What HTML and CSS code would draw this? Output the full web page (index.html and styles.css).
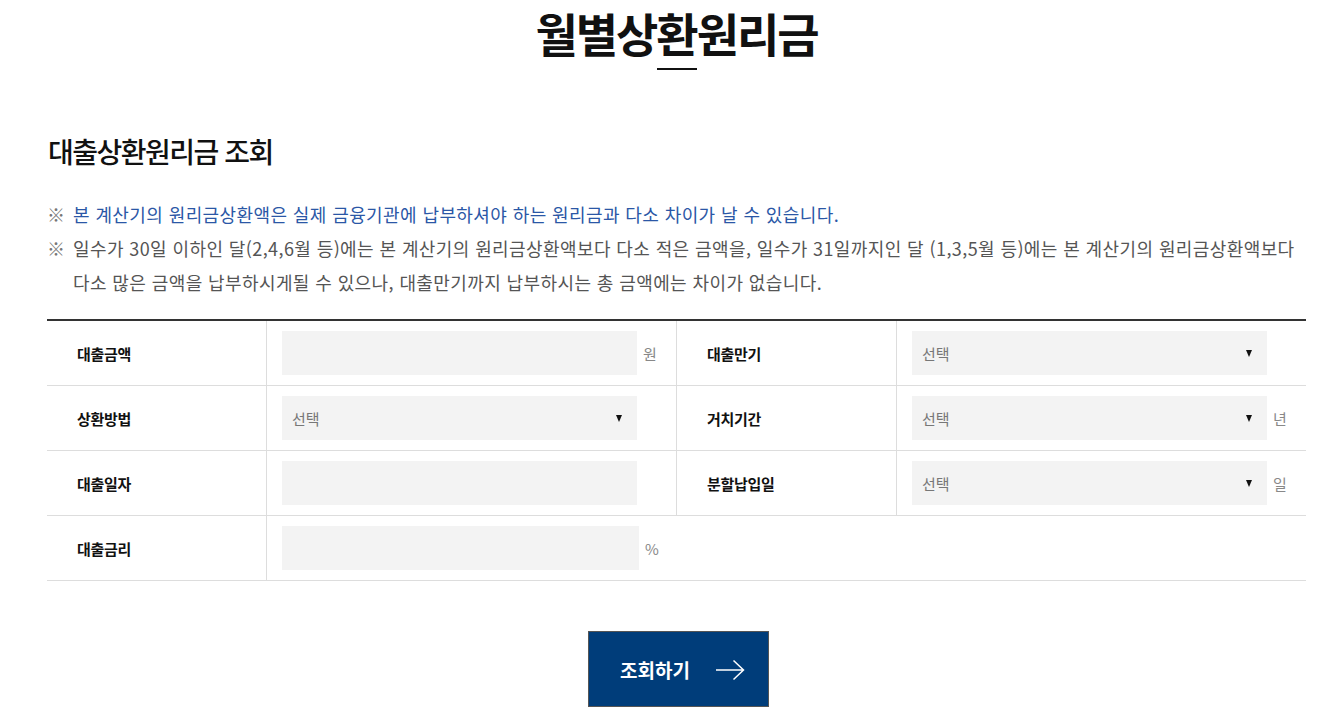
FILE: index.html
```html
<!DOCTYPE html>
<html lang="ko">
<head>
<meta charset="utf-8">
<title>월별상환원리금</title>
<link rel="stylesheet" href="styles.css">
</head>
<body>
<div class="wrap">
  <h1 class="page-title">월별상환원리금</h1>
  <div class="title-bar"></div>

  <h2 class="sub-title">대출상환원리금 조회</h2>

  <ul class="notes">
    <li class="note note-blue"><span class="mark">※</span><span>본 계산기의 원리금상환액은 실제 금융기관에 납부하셔야 하는 원리금과 다소 차이가 날 수 있습니다.</span></li>
    <li class="note"><span class="mark">※</span><span>일수가 30일 이하인 달(2,4,6월 등)에는 본 계산기의 원리금상환액보다 다소 적은 금액을, 일수가 31일까지인 달 (1,3,5월 등)에는 본 계산기의 원리금상환액보다 다소 많은 금액을 납부하시게될 수 있으나, 대출만기까지 납부하시는 총 금액에는 차이가 없습니다.</span></li>
  </ul>

  <div class="form-table">
    <div class="row">
      <div class="label">대출금액</div>
      <div class="cell"><div class="field"></div><span class="unit">원</span></div>
      <div class="label">대출만기</div>
      <div class="cell"><div class="field select"><span>선택</span><span class="arrow"></span></div></div>
    </div>
    <div class="row">
      <div class="label">상환방법</div>
      <div class="cell"><div class="field select"><span>선택</span><span class="arrow"></span></div></div>
      <div class="label">거치기간</div>
      <div class="cell"><div class="field select"><span>선택</span><span class="arrow"></span></div><span class="unit">년</span></div>
    </div>
    <div class="row">
      <div class="label">대출일자</div>
      <div class="cell"><div class="field"></div></div>
      <div class="label">분할납입일</div>
      <div class="cell"><div class="field select"><span>선택</span><span class="arrow"></span></div><span class="unit">일</span></div>
    </div>
    <div class="row">
      <div class="label">대출금리</div>
      <div class="cell"><div class="field wide"></div><span class="unit">%</span></div>
      <div class="empty"></div>
    </div>
  </div>

  <div class="btn-area">
    <button class="btn-search" type="button">
      <span>조회하기</span>
      <svg width="30" height="22" viewBox="0 0 30 22" aria-hidden="true"><path d="M1 11H28.5M18.5 1.5L28.5 11L18.5 20.5" fill="none" stroke="#fff" stroke-width="1.5"/></svg>
    </button>
  </div>
</div>
</body>
</html>
```

FILE: styles.css
```css
* { box-sizing: border-box; }
html, body { margin: 0; padding: 0; background: #fff; }
body {
  font-family: "Noto Sans CJK KR", "Noto Sans", sans-serif;
  color: #222;
}
.wrap {
  width: 1259px;
  margin-left: 47px;
  display: flex;
  flex-direction: column;
}
.page-title {
  margin: 0;
  padding-top: 2px;
  text-align: center;
  font-size: 46px;
  font-weight: 700;
  letter-spacing: -2px;
  line-height: 60px;
  color: #111;
}
.title-bar {
  width: 40px;
  height: 2px;
  background: #111;
  margin: 6px auto 0;
}
.sub-title {
  margin: 61px 0 0 1px;
  font-size: 28px;
  font-weight: 500;
  letter-spacing: -1.5px;
  line-height: 40px;
  color: #111;
}
.notes {
  list-style: none;
  margin: 26px 0 0;
  padding: 0;
}
.note {
  display: flex;
  font-size: 18px;
  line-height: 34px;
  color: #555;
  letter-spacing: 0.4px;
}
.note .mark {
  flex: 0 0 26px;
  color: #777;
  letter-spacing: 0;
}
.note-blue { color: #2b57a6; }
.form-table {
  margin-top: 20px;
  border-top: 2px solid #333;
}
.row {
  display: grid;
  grid-template-columns: 220px 410px 220px 409px;
  height: 65px;
  border-bottom: 1px solid #ddd;
}
.label {
  display: flex;
  align-items: center;
  padding-left: 30px;
  font-size: 15px;
  font-weight: 700;
  color: #111;
  letter-spacing: -0.3px;
  border-right: 1px solid #ddd;
}
.cell {
  display: flex;
  align-items: center;
  padding-left: 15px;
  border-right: 1px solid #ddd;
}
.row > .cell:last-child { border-right: 0; }
.row:last-child .cell { border-right: 0; }
.empty { grid-column: span 2; }
.field {
  width: 355px;
  height: 44px;
  background: #f3f3f3;
  flex: 0 0 auto;
}
.field.wide { width: 357px; }
.select {
  display: flex;
  align-items: center;
  justify-content: space-between;
  padding: 0 15px 0 10px;
  font-size: 15px;
  color: #777;
}
.arrow {
  width: 0;
  height: 0;
  border-left: 3.5px solid transparent;
  border-right: 3.5px solid transparent;
  border-top: 7px solid #111;
}
.unit {
  margin-left: 6px;
  font-size: 15px;
  color: #888;
}
.btn-area {
  display: flex;
  justify-content: center;
  margin-top: 50px;
}
.btn-search {
  width: 181px;
  height: 76px;
  margin-left: 4px;
  background: #003d7a;
  border: 1px solid #555;
  color: #fff;
  font-family: inherit;
  font-size: 19px;
  font-weight: 700;
  letter-spacing: 0;
  display: flex;
  align-items: center;
  justify-content: flex-start;
  padding: 0 0 0 31px;
  gap: 25px;
  cursor: pointer;
}
.btn-search svg { margin-top: 1px; }
```
